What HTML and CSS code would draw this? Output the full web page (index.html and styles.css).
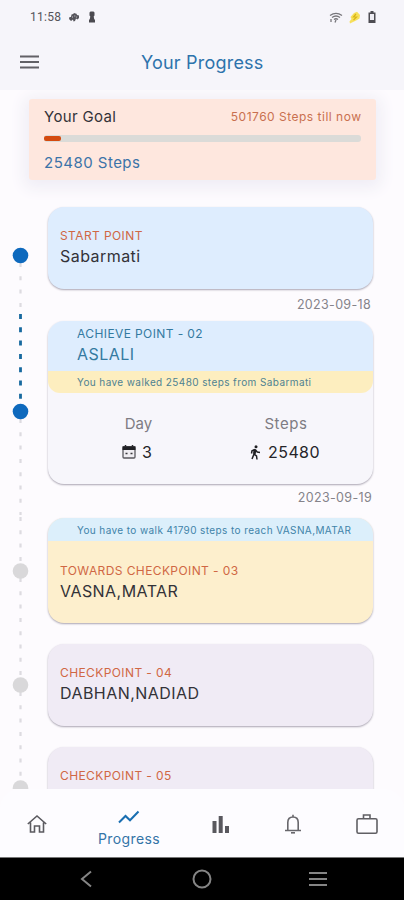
FILE: index.html
```html
<!DOCTYPE html>
<html lang="en">
<head>
<meta charset="utf-8">
<title>Your Progress</title>
<link rel="stylesheet" href="styles.css">
</head>
<body>
<div class="status">
  <span class="time">11:58</span>
  <svg class="s-hand" width="12" height="11" viewBox="0 0 12 11"><path d="M1 7 1.5 5 3 5 3.5 2.5 5.2 2 6 1 7.5 1.5 8.5 1.7 9 3 11 3.5 11 6 9.5 7.5 8 6.5 7 9 5.5 9.5 5 7.5 3 9Z" fill="#55545b"/><path d="M4.5 4v2M6.8 3v2M8.8 4.2 8.3 6" stroke="#aaa9b0" stroke-width=".7"/></svg>
  <svg class="s-tower" width="8" height="12" viewBox="0 0 8 12"><path d="M1.500 1.500 2.500.5h3l1 1v3L5.700 5.500 6.200 8l.8 1v2.500H1V9l.8-1 .5-2.500-.8-1Z" fill="#4b4a50"/></svg>
  <span class="grow"></span>
  <svg class="s-wifi" width="14" height="13" viewBox="0 0 14 13" fill="none" stroke="#77767b" stroke-width="1.300"><path d="M1 4.500Q7 .2 13 4.500M3 6.500Q7 3.500 11 6.500M5 8.500Q7 7 9 8.500"/><path d="M2 8v3M7 9 6 11.500"/></svg>
  <svg class="s-bolt" width="13" height="13" viewBox="0 0 13 13"><path d="M6 2 9 .8 12 4 11.500 7.500 9 9 6 10.500 2 12.500 1.500 10.500 3.500 8 2.500 6Z" fill="#f7e05c"/><path d="M8 3 5.500 6h3L5.500 9" fill="none" stroke="#d9b516" stroke-width="1.200"/></svg>
  <svg class="s-bat" width="10" height="14" viewBox="0 0 10 14"><path d="M3.500 1h3v1.500h-3zM1.500 2.500h7v10.500h-7z" fill="#4d4c52"/><path d="M3 4h4v6H3z" fill="#eeedf3"/></svg>
</div>
<header class="appbar">
  <svg class="menu" width="20" height="14" viewBox="0 0 20 14"><path d="M0 1.500h19M0 7h19M0 12.500h19" stroke="#626166" stroke-width="2.200"/></svg>
  <h1>Your Progress</h1>
</header>
<main>
  <section class="goal">
    <div class="goal-head"><span class="goal-title">Your Goal</span><span class="goal-total">501760 Steps till now</span></div>
    <div class="bar"><div class="fill"></div></div>
    <div class="goal-steps">25480 Steps</div>
  </section>
  <section class="timeline">
    <svg class="rail" width="48" height="589" viewBox="0 0 48 589">
      <g fill="none" stroke="#dddbe0" stroke-width="2.200" stroke-dasharray="4 9.300">
        <path d="M20.500 56V102M20.500 212V308M20.500 310V358M20.500 371V470M20.500 485V575"/>
      </g>
      <path d="M20.500 107V198" stroke="#17699f" stroke-width="2.800" stroke-dasharray="5 8.300"/>
      <g fill="#0e69bd"><circle cx="20.500" cy="48.500" r="7.800"/><circle cx="20.500" cy="204.500" r="7.800"/></g>
      <g fill="#d9d8da"><circle cx="20.500" cy="364" r="7.800"/><circle cx="20.500" cy="478" r="7.800"/><circle cx="20.500" cy="581" r="7.800"/></g>
    </svg>
    <div class="cards">
      <article class="card blue"><p class="label">START POINT</p><p class="place">Sabarmati</p></article>
      <p class="date">2023-09-18</p>
      <article class="card achieved">
        <div class="top"><p class="label">ACHIEVE POINT - 02</p><p class="place">ASLALI</p></div>
        <p class="note n1">You have walked 25480 steps from Sabarmati</p>
        <div class="stats">
          <div><p class="stat-name">Day</p><p class="stat-val">
            <svg width="14" height="14" viewBox="0 0 14 14"><path d="M3.500 0v2M10.500 0v2" stroke="#29282c" stroke-width="1.500"/><rect x="1" y="2" width="12" height="11" rx="1" fill="#efedf2" stroke="#59585d" stroke-width="1.300"/><path d="M.5 1.300h13V5H.5z" fill="#202024"/><path d="M3.500 8.500h2M8.500 8.500h2" stroke="#39383d" stroke-width="1.500"/></svg><span>3</span></p></div>
          <div><p class="stat-name steps">Steps</p><p class="stat-val walk">
            <svg width="12" height="15" viewBox="0 0 12 15" fill="none" stroke="#202024" stroke-width="1.500"><circle cx="7" cy="1.800" r="1.500" fill="#202024" stroke="none"/><path d="M6 4.300 5 9 3 14M5 9 7.500 11 8 14.500M6 4.500 8.300 7 11 7.500M6 4.500 3 5.700 2.500 8.500"/><path d="M6 4.500 5.400 9" stroke-width="2.600"/></svg><span class="count">25480</span></p></div>
        </div>
      </article>
      <p class="date d2">2023-09-19</p>
      <article class="card towards">
        <p class="note n2">You have to walk 41790 steps to reach VASNA,MATAR</p>
        <p class="label">TOWARDS CHECKPOINT - 03</p><p class="place">VASNA,MATAR</p>
      </article>
      <article class="card next"><p class="label">CHECKPOINT - 04</p><p class="place">DABHAN,NADIAD</p></article>
      <article class="card next"><p class="label">CHECKPOINT - 05</p></article>
    </div>
  </section>
</main>
<nav>
  <a><svg width="20" height="20" viewBox="0 0 20 20" fill="none" stroke="#5b5a60" stroke-width="1.600"><path d="M.8 10 10 2 19.200 10M3.500 8.500V18H7.500V12H12.500V18H16.500V8.500"/></svg></a>
  <a class="active"><svg width="22" height="14" viewBox="0 0 22 14" fill="none" stroke="#196eb1" stroke-width="2"><path d="M1 12.500 7.500 6 12 10.300 20.500 1.500"/></svg><span>Progress</span></a>
  <a><svg width="18" height="18" viewBox="0 0 18 18" fill="#59585e"><path d="M.5 6h4v12h-4zM6.700 1h4v17h-4zM13 11h4v7h-4z"/></svg></a>
  <a><svg width="18" height="20" viewBox="0 0 18 20" fill="none" stroke="#68676c" stroke-width="1.600"><path d="M1 16.500H17M3.800 16V8.500Q3.800 3 9 3T14.200 8.500V16M9 3V.8"/><path d="M7 18.800h4"/></svg></a>
  <a><svg width="22" height="20" viewBox="0 0 22 20" fill="none" stroke="#605f64" stroke-width="1.600"><rect x="1" y="4.800" width="20" height="14.400" rx="1.500"/><path d="M7.500 4.500V1h6.500v3.500"/></svg></a>
</nav>
<footer>
  <svg width="12" height="18" viewBox="0 0 12 18" fill="none" stroke="#858585" stroke-width="2"><path d="M11 1.500 2 9l9 7.500"/></svg>
  <svg class="home" width="20" height="20" viewBox="0 0 20 20" fill="none" stroke="#858585" stroke-width="2"><circle cx="10" cy="10" r="8.500"/></svg>
  <svg width="18" height="16" viewBox="0 0 18 16" stroke="#858585" stroke-width="2.200"><path d="M0 2h18M0 8h18M0 14h18"/></svg>
</footer>
</body>
</html>
```
FILE: styles.css
```css
* { box-sizing: border-box; }
body { margin: 0; width: 404px; height: 900px; overflow: hidden; display: flex; flex-direction: column; background: #fdfbfe; font-family: Inter, "Liberation Sans", sans-serif; color: #333238; }
p, h1 { margin: 0; font-weight: 400; white-space: nowrap; }
svg { display: block; flex: none; }
.status { height: 34px; flex: none; background: #f6f5fa; display: flex; align-items: center; padding: 0 27px 0 30px; }
.time { font: 400 12px/16px Roboto, sans-serif; letter-spacing: .3px; color: #55545a; }
.s-hand { margin-left: 7px; }
.s-tower { margin-left: 8px; }
.grow { flex: 1; }
.s-bolt { margin-left: 5px; }
.s-bat { margin-left: 6px; }
.appbar { height: 56px; flex: none; background: #f6f5fa; display: flex; align-items: center; padding-left: 20px; }
.menu { margin-right: 101px; }
h1 { font-size: 18px; line-height: 24px; letter-spacing: .2px; padding-top: 1px; color: #2d73ac; }
main { height: 699px; flex: none; overflow: hidden; padding-top: 9px; }
.goal { width: 347px; height: 81px; margin-left: 29px; padding: 7px 15px 0; border-radius: 3px; background: #fee7de; box-shadow: 0 3px 16px 5px #efedf5; }
.goal-head { display: flex; justify-content: space-between; align-items: center; height: 20px; }
.goal-title { font-size: 15px; letter-spacing: .35px; }
.goal-total { font-size: 12px; letter-spacing: .5px; margin-right: -.5px; padding-top: 1px; color: #c9704f; }
.bar { height: 7px; margin-top: 9px; border-radius: 3px; background: #dbdbd8; padding: 1px 0; }
.fill { width: 17px; height: 5px; background: #d44b10; border-radius: 2px; }
.goal-steps { margin-top: 10px; font-size: 15px; letter-spacing: .48px; line-height: 22px; color: #3b73a8; }
.timeline { display: flex; margin-top: 27px; }
.cards { width: 325px; flex: none; }
.card { border-radius: 16px; overflow: hidden; box-shadow: 0 1px 2px #aaa5b2; }
.blue { height: 82px; padding: 20px 12px; background: #deedfe; }
.label { font-size: 12px; line-height: 18px; letter-spacing: .4px; color: #d06744; }
.place { font-size: 16px; line-height: 22px; letter-spacing: .45px; color: #333238; }
.date { height: 32px; line-height: 32px; font-size: 12.5px; letter-spacing: .33px; text-align: right; color: #85838a; padding-right: 2px; }
.achieved { height: 163px; background: #f7f6fb; }
.top { height: 50px; background: #deedfe; padding: 4px 0 0 29px; }
.top .label, .top .place { color: #347aa1; }
.note { font-size: 10px; letter-spacing: .4px; padding-left: 29px; color: #4f8291; }
.n1 { height: 22px; line-height: 23px; background: #fdeebf; border-radius: 0 0 12px 12px; }
.stats { display: grid; grid-template-columns: 181px 114px; padding-top: 20px; }
.stat-name { text-align: center; font-size: 15px; line-height: 22px; color: #7e7c83; }
.steps { letter-spacing: .6px; }
.stat-val { display: flex; justify-content: center; align-items: center; gap: 6px; height: 24px; margin-top: 5px; padding-right: 3px; font-size: 16px; color: #252429; }
.walk { gap: 7px; }
.count { letter-spacing: .4px; }
.d2 { height: 34px; line-height: 27px; padding-right: 1px; }
.towards { height: 105px; background: #fdefcd; }
.n2 { height: 23px; line-height: 25px; background: #dceffb; color: #3f83a9; }
.towards .label { margin: 21px 12px 0; }
.towards .place { margin: 0 12px; }
.next { height: 82px; margin-top: 21px; padding: 20px 12px; background: #f0ebf5; }
nav { height: 68px; flex: none; background: #fdfcff; display: grid; grid-template-columns: 71px 62px 69px 73px 73px; align-items: center; padding: 2px 0 0 27px; border-radius: 20px 20px 0 0; }
nav a { display: block; }
nav a:nth-child(3) { justify-self: end; margin-right: -1px; }
nav a:nth-child(4) { justify-self: end; }
nav a:nth-child(5) { justify-self: end; margin-right: -3px; }
.active { display: flex; flex-direction: column; align-items: center; padding-top: 11px; color: #3474a7; }
.active span { font-size: 14px; line-height: 20px; letter-spacing: .4px; margin-top: 5px; }
footer { height: 43px; flex: none; background: #000; border-top: 1px solid #777; display: flex; align-items: center; justify-content: space-between; padding: 0 77px 0 80px; }
.home { margin-left: 3px; }
```
